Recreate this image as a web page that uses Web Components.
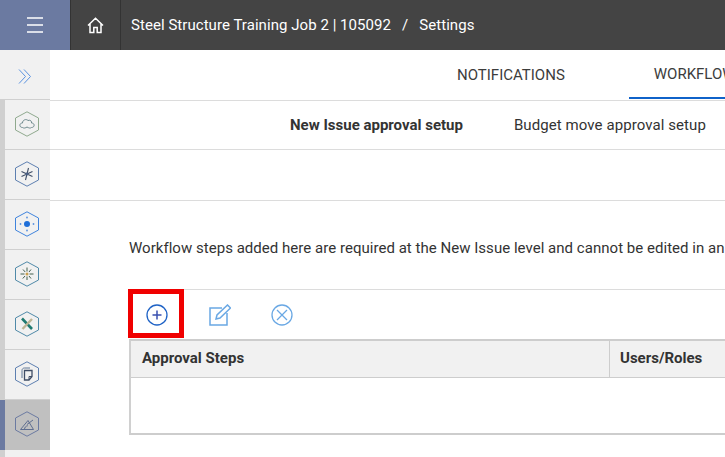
<!DOCTYPE html>
<html>
<head>
<meta charset="utf-8">
<style>
    html, body { margin: 0; height: 100%; overflow: hidden; background: #fff; font-family: Roboto, sans-serif; color: #333; }
    body { display: flex; flex-direction: column; }
    .main { display: flex; flex: 1; min-height: 0; }
</style>
</head>
<body>
<top-bar title-text="Steel Structure Training Job 2 | 105092" page="Settings"></top-bar>
<div class="main">
    <side-nav>
        <nav-item icon="cloud" tint="#8fa98e"></nav-item>
        <nav-item icon="star"></nav-item>
        <nav-item icon="dot" tint="#3f83dc"></nav-item>
        <nav-item icon="burst" tint="#4f89a8"></nav-item>
        <nav-item icon="tools" tint="#4f89a8"></nav-item>
        <nav-item icon="docs"></nav-item>
        <nav-item icon="chart" active></nav-item>
    </side-nav>
    <settings-page></settings-page>
</div>

<script>
class TopBar extends HTMLElement {
    constructor() {
        super();
        this.attachShadow({ mode: 'open' });
    }
    connectedCallback() {
        this.shadowRoot.innerHTML = `
            <style>
                :host { display: flex; height: 50px; flex: none; background: #444; color: #fff; font-size: 15px; }
                .menu { width: 70px; background: #6b7aa1; border-right: 1px solid #333; display: flex; align-items: center; justify-content: center; }
                .home { width: 49px; border-right: 1px solid #333; display: flex; align-items: center; justify-content: center; }
                .title { padding-left: 10px; display: flex; align-items: center; gap: 11px; white-space: nowrap; letter-spacing: 0.05px; }
            </style>
            <div class="menu">
                <svg width="16" height="16" viewBox="0 0 16 16"><path d="M0 1h16M0 8h16M0 15h16" stroke="#fff" stroke-width="1.5"/></svg>
            </div>
            <div class="home">
                <svg width="17" height="17" viewBox="0 0 17 17" fill="none" stroke="#fff" stroke-width="1.5"><path d="M1 8.500 8.500 1.200 16 8.500M3 7v8.500h3.800v-5h3.400v5H14V7"/></svg>
            </div>
            <div class="title"><span>${this.getAttribute('title-text')}</span><span>/</span><span>${this.getAttribute('page')}</span></div>
        `;
    }
}

class SideNav extends HTMLElement {
    constructor() {
        super();
        this.attachShadow({ mode: 'open' });
    }
    connectedCallback() {
        this.shadowRoot.innerHTML = `
            <style>
                :host { display: flex; flex-direction: column; width: 50px; flex: none; background: #f1f1f1; }
                .toggle { height: 49px; flex: none; border-bottom: 1px solid #d0d0d0; display: flex; align-items: center; justify-content: center; }
                .toggle svg { margin-top: 3px; }
                .list { border-left: 5px solid #d0d0d0; flex: 1; min-height: 0; }
            </style>
            <div class="toggle">
                <svg width="14" height="15" viewBox="0 0 14 15" fill="none" stroke="#5b93e0" stroke-width="1"><path d="M1 .5 7.500 7.500 1 14.500M6 .5l6.500 7L6 14.500"/></svg>
            </div>
            <div class="list"><slot></slot></div>
        `;
    }
}

const NAV_ICONS = {
    cloud: '<path d="M8.500 16.500C5 16.500 5 12 8.500 12 8.500 9 12 7.500 14 9.500 16.500 8.500 18 10.500 17.500 12 21 12 21 16.500 17.500 16.500 16 17.500 15 17 13 16 11.500 17 10 17.500 8.500 16.500z" stroke="#6f8a8e"/>',
    star: '<path d="M14.500 7 11.500 19M7.500 10.500l11 5M18.500 10.500l-11 5" stroke="#3f4d66" stroke-width="1.100"/><circle cx="13" cy="13" r="1.400" fill="#4a5f85"/>',
    dot: '<circle cx="13" cy="13" r="3" fill="#1f6fd8"/><circle cx="6.500" cy="13" r=".9" fill="#5b93e0"/><circle cx="19.500" cy="13" r=".9" fill="#5b93e0"/><circle cx="13" cy="6.500" r=".9" fill="#5b93e0"/><circle cx="13" cy="19.500" r=".9" fill="#5b93e0"/>',
    burst: '<path d="M13 6.500v4M13 15.500v3.500M6.500 13h4M15.500 13h4M9 8.500l2.200 2.500M15 15l2 2.500M17 8.500l-2 2.500M11 15l-2.200 2.500" stroke="#43604f"/><circle cx="13" cy="13" r="1.500" fill="#c8a050"/>',
    tools: '<path d="M8 7.500l10 10.500" stroke="#1f7a70" stroke-width="2.600"/><path d="M18 8 8.500 18" stroke="#bdb596" stroke-width="2.400"/>',
    docs: '<path d="M8 17V9.500C8 8 9 7 10.500 7h5.500" stroke="#5f7696"/><path d="M10.500 9.500h7.500v6l-3 3.500h-4.500z" stroke="#3f4d66" stroke-width="1.300"/><path d="M15 19v-3.500h3" stroke="#3f4d66"/>',
    chart: '<path d="M6.500 18.500h13L14 9.500zM10.500 18.500c0-2.200 1.300-3.400 3.300-3.800M13 13.500l6-4.500" stroke="#5f6e90"/>'
};

class NavItem extends HTMLElement {
    constructor() {
        super();
        this.attachShadow({ mode: 'open' });
    }
    connectedCallback() {
        const active = this.hasAttribute('active');
        const hex = this.getAttribute('tint') || (active ? '#6b7aa1' : '#5d7fb0');
        this.shadowRoot.innerHTML = `
            <style>
                :host { display: flex; position: relative; height: 49px; border-bottom: 1px solid #d0d0d0; align-items: center; justify-content: center; }
                :host([active]) { background: #c0c0c0; border-bottom-color: #c0c0c0; }
                :host([active])::before { content: ''; position: absolute; left: -5px; top: 0; bottom: -1px; width: 5px; background: #6b7aa1; }
                svg { display: block; margin: 0 2px 1px 0; }
            </style>
            <svg width="26" height="26" viewBox="0 0 26 26" fill="none" stroke-width="1">
                <path d="M13 .8 24.500 7v12L13 25.200 1.500 19V7z" stroke="${hex}"/>
                ${NAV_ICONS[this.getAttribute('icon')]}
            </svg>
        `;
    }
}

class SettingsPage extends HTMLElement {
    constructor() {
        super();
        this.attachShadow({ mode: 'open' });
    }
    connectedCallback() {
        this.shadowRoot.innerHTML = `
            <style>
                :host { display: block; flex: 1; min-width: 0; overflow: hidden; font-size: 15px; }
                .tabs { height: 50px; border-bottom: 1px solid #dcdcdc; white-space: nowrap; display: flex; padding-left: 407px; }
                .tab { display: flex; align-items: center; padding-right: 64px; color: #3c3c3c; }
                .tab.on { padding: 0 25px; border-bottom: 2px solid #0f62c9; height: 49px; box-sizing: border-box; flex: none; }
                .subtabs { height: 48px; border-bottom: 1px solid #dcdcdc; display: flex; align-items: center; padding-left: 240px; gap: 51px; white-space: nowrap; }
                .subtabs b { font-weight: 700; }
                .subtabs span { letter-spacing: 0.08px; }
                .blank { height: 50px; border-bottom: 1px solid #dcdcdc; }
                .body { padding: 38px 0 0 79px; }
                .note { white-space: nowrap; height: 18px; line-height: 18px; letter-spacing: 0.03px; }
                .frame { margin-top: 32px; width: 700px; border-top: 1px solid #dcdcdc; position: relative; }
                .tools { height: 49px; display: flex; align-items: center; gap: 40px; padding-left: 18px; }
                .tools svg { display: block; }
                .tools svg:first-child { margin-left: -1px; margin-right: 1px; }
                .mark { position: absolute; left: -1px; top: -1px; width: 46px; height: 39px; border: 5px solid #f00000; }
            </style>
            <div class="tabs">
                <div class="tab">NOTIFICATIONS</div>
                <div class="tab on">WORKFLOW</div>
            </div>
            <div class="subtabs">
                <b>New Issue approval setup</b>
                <span>Budget move approval setup</span>
            </div>
            <div class="blank"></div>
            <div class="body">
                <div class="note">Workflow steps added here are required at the New Issue level and cannot be edited in an</div>
                <div class="frame">
                    <div class="tools">
                        <svg width="22" height="22" viewBox="0 0 22 22" fill="none"><circle cx="11" cy="11" r="10" stroke="#1f63c6" stroke-width="1.300"/><path d="M11 6.500v9M6.500 11h9" stroke="#3a50b0" stroke-width="1.500"/></svg>
                        <svg width="22" height="22" viewBox="0 0 22 22" fill="none" stroke="#6aa8e4" stroke-width="1.500"><path d="M13 4H1v17h17V9"/><path d="M7 15l1-4L18.500 1l3 3L11 14z"/></svg>
                        <svg width="22" height="22" viewBox="0 0 22 22" fill="none" stroke="#6aa8e4" stroke-width="1.300"><circle cx="11" cy="11" r="10"/><path d="M6 6l10 10M16 6 6 16"/></svg>
                    </div>
                    <div class="mark"></div>
                    <approval-table></approval-table>
                </div>
            </div>
        `;
    }
}

class ApprovalTable extends HTMLElement {
    constructor() {
        super();
        this.attachShadow({ mode: 'open' });
    }
    connectedCallback() {
        this.shadowRoot.innerHTML = `
            <style>
                :host { display: block; border-left: 2px solid #d0d0d0; border-top: 2px solid #cdcdcd; border-bottom: 2px solid #cdcdcd; }
                .head { height: 36px; background: #f1f1f1; border-bottom: 1px solid #cdcdcd; display: grid; grid-template-columns: 479px 1fr; font-weight: 700; color: #333; }
                .head div { display: flex; align-items: center; padding: 0 0 2px 11px; }
                .head div:first-child { border-right: 1px solid #cdcdcd; }
                .head div:last-child { padding-left: 10px; }
                .rows { height: 55px; background: #fff; }
            </style>
            <div class="head"><div>Approval Steps</div><div>Users/Roles</div></div>
            <div class="rows"></div>
        `;
    }
}

customElements.define('top-bar', TopBar);
customElements.define('side-nav', SideNav);
customElements.define('nav-item', NavItem);
customElements.define('settings-page', SettingsPage);
customElements.define('approval-table', ApprovalTable);
</script>
</body>
</html>
